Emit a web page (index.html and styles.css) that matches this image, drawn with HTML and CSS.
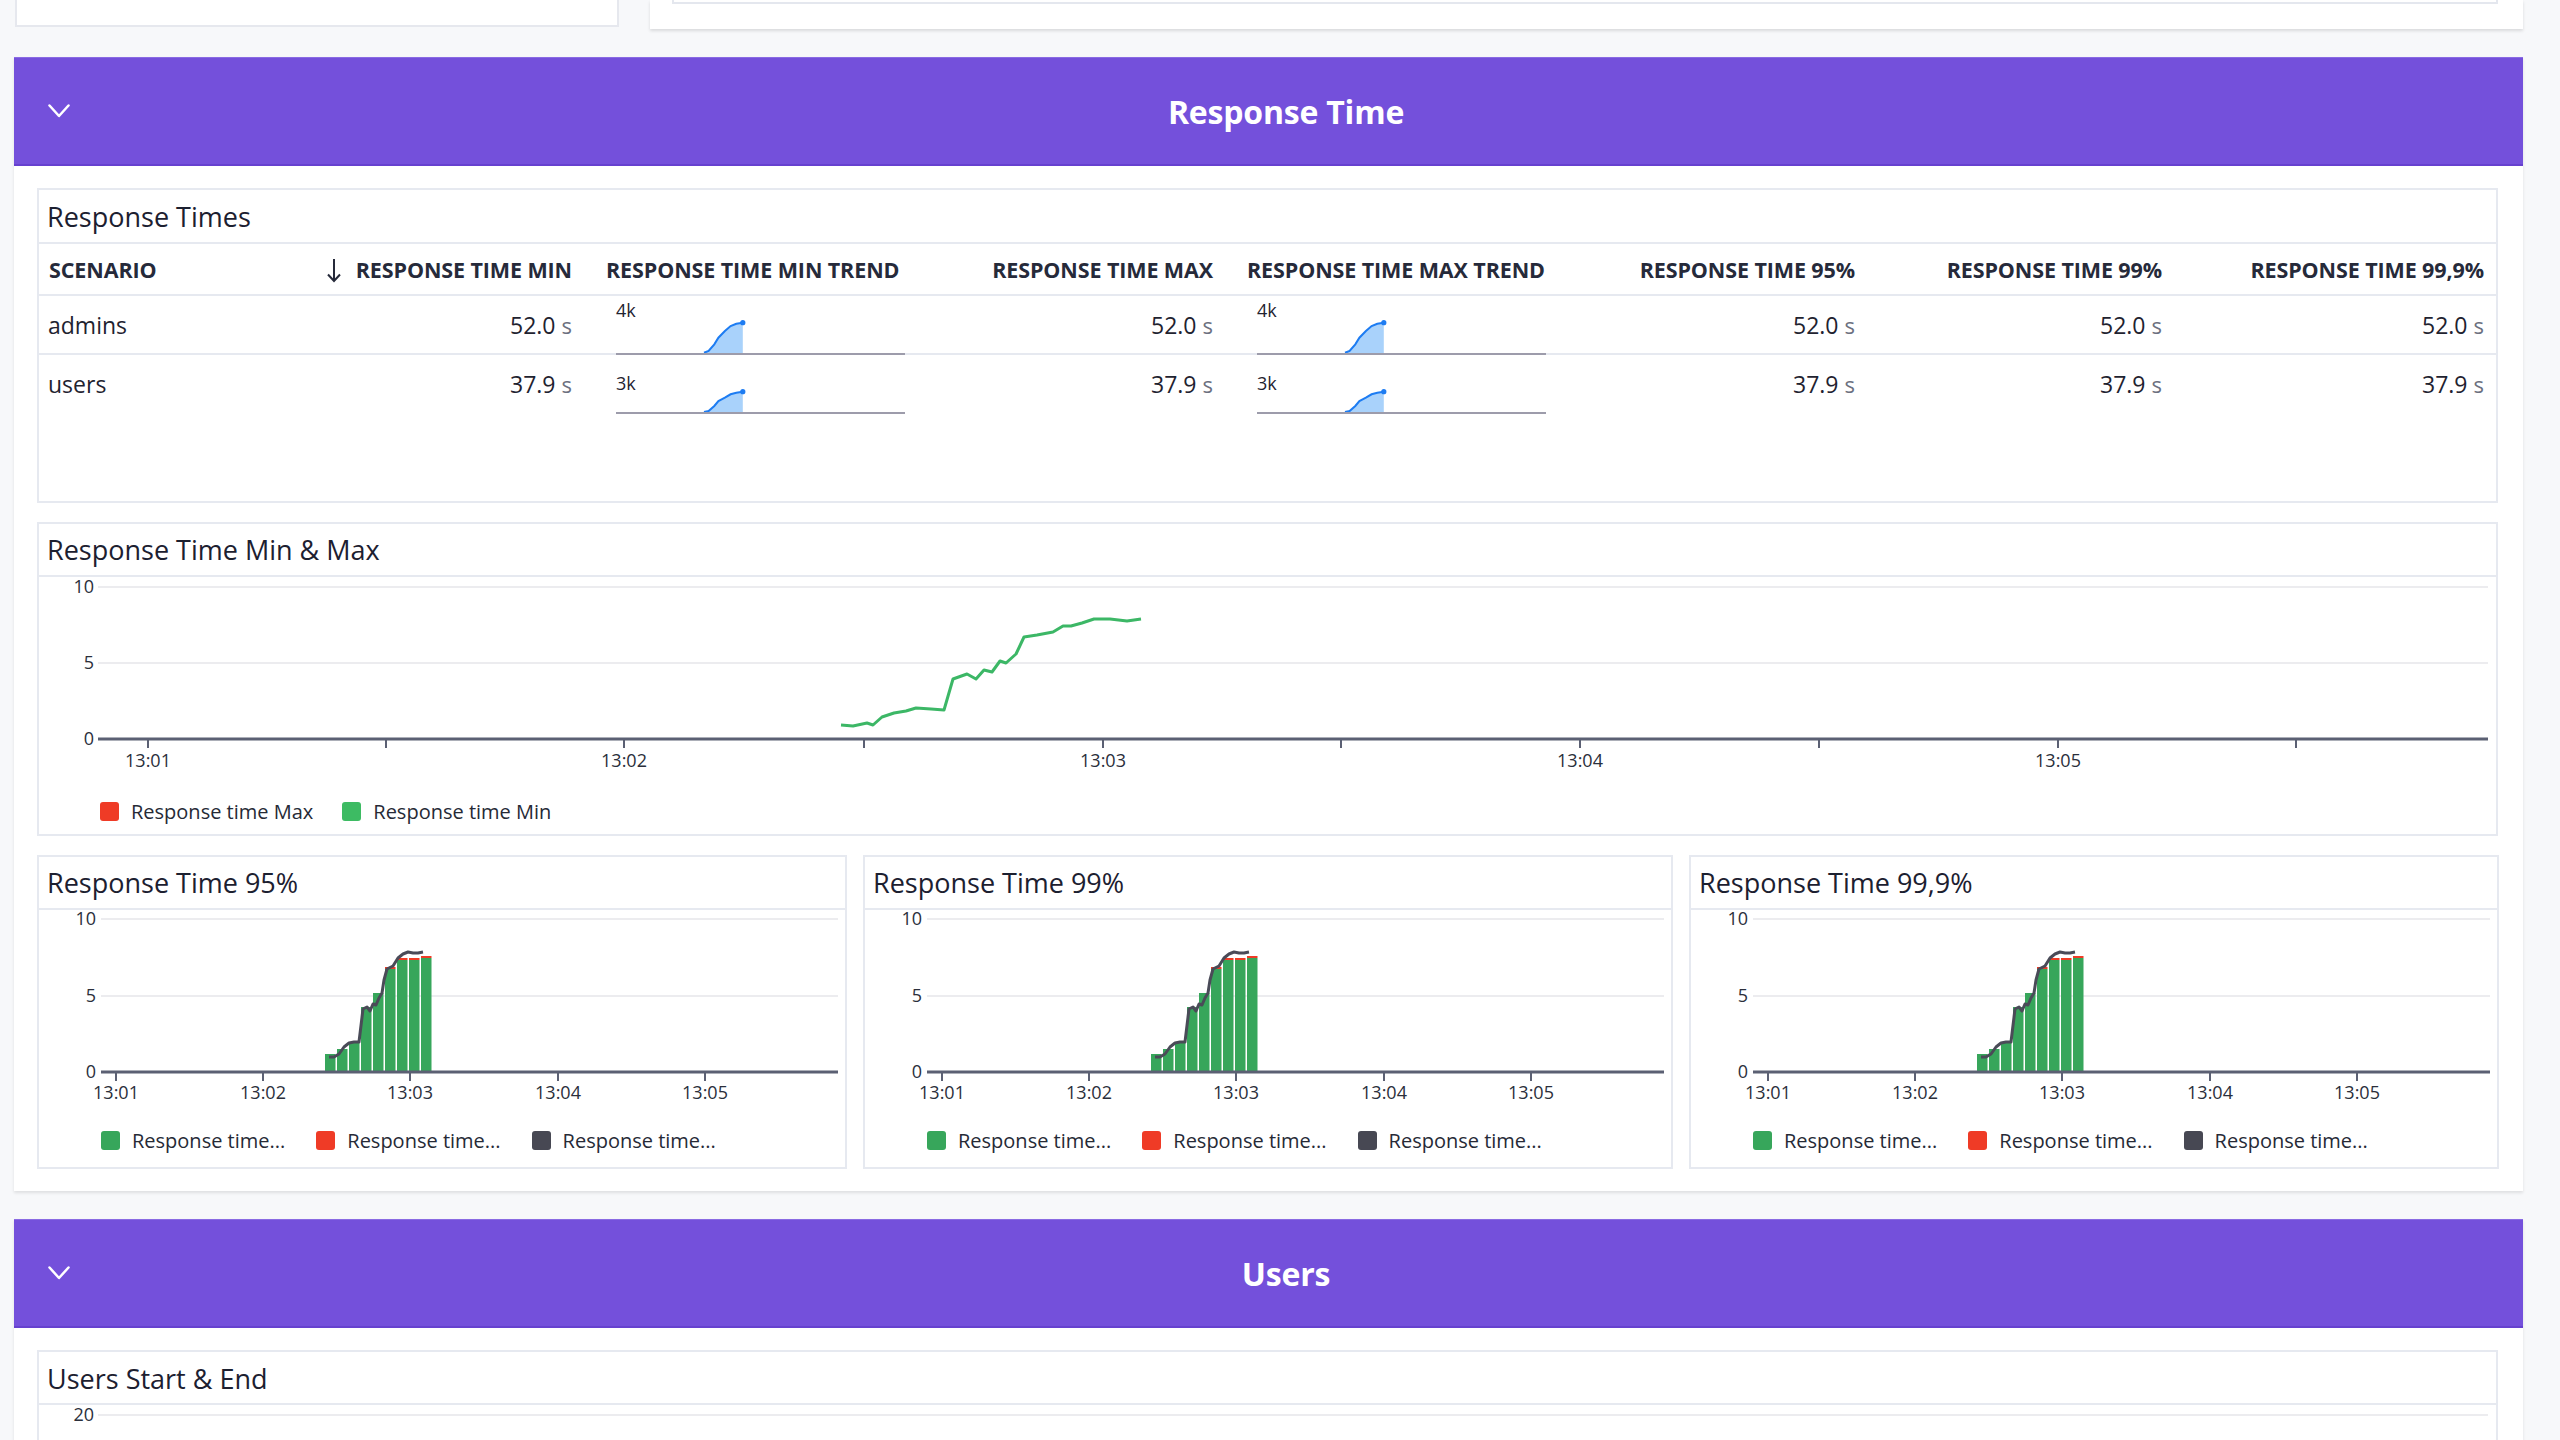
FILE: index.html
```html
<!DOCTYPE html>
<html lang="en">
<head>
<meta charset="utf-8">
<title>Report</title>
<link rel="stylesheet" href="styles.css">
</head>
<body>
<div class="page">
  <div class="top-row">
    <div class="top-card top-card-left"></div>
    <div class="top-card top-card-right"><div class="top-inner"></div></div>
  </div>

  <section class="section">
    <header class="section-head">
      <svg class="chev" width="22" height="14" viewBox="0 0 22 14"><polyline points="1.5,1.5 11,12 20.5,1.5" fill="none" stroke="#fff" stroke-width="2.5" stroke-linecap="round" stroke-linejoin="round"/></svg>
      <h2 class="section-title">Response Time</h2>
    </header>
    <div class="section-body">
      <div class="panel panel-table">
        <div class="panel-title">Response Times</div>
        <div class="trow thead">
          <div class="c c-left">SCENARIO</div>
          <div class="c c-right"><svg class="sort" width="14" height="25" viewBox="0 0 14 25"><line x1="7" y1="1" x2="7" y2="23" stroke="#262a3a" stroke-width="2"/><polyline points="1,16.5 7,23 13,16.5" fill="none" stroke="#262a3a" stroke-width="2"/></svg>RESPONSE TIME MIN</div>
          <div class="c c-trend">RESPONSE TIME MIN TREND</div>
          <div class="c c-right">RESPONSE TIME MAX</div>
          <div class="c c-trend">RESPONSE TIME MAX TREND</div>
          <div class="c c-right">RESPONSE TIME 95%</div>
          <div class="c c-right">RESPONSE TIME 99%</div>
          <div class="c c-right">RESPONSE TIME 99,9%</div>
        </div>
        <div class="trow tbody row-a">
          <div class="c c-left">admins</div>
          <div class="c c-right">52.0<span class="unit">s</span></div>
          <div class="c c-spark">
            <div class="spark spark-a">
              <span class="spark-label">4k</span>
              <svg width="289" height="57" viewBox="0 0 289 57" overflow="visible">
                <path d="M88 56.7 L92.6 55 L98.3 48.3 L102.4 41.7 L108.9 35 L114.6 30 L120.3 27.7 L126.8 26.7 L126.8 58 L88 58 Z" fill="#a9d2fb"/>
                <polyline points="88,56.7 92.6,55 98.3,48.3 102.4,41.7 108.9,35 114.6,30 120.3,27.7 126.8,26.7" fill="none" stroke="#1d7cf2" stroke-width="2"/>
                <circle cx="126.8" cy="26.7" r="2.6" fill="#1d7cf2"/>
                <line x1="0" y1="58" x2="289" y2="58" stroke="#9d9cab" stroke-width="2"/>
              </svg>
            </div>
          </div>
          <div class="c c-right">52.0<span class="unit">s</span></div>
          <div class="c c-spark">
            <div class="spark spark-a">
              <span class="spark-label">4k</span>
              <svg width="289" height="57" viewBox="0 0 289 57" overflow="visible">
                <path d="M88 56.7 L92.6 55 L98.3 48.3 L102.4 41.7 L108.9 35 L114.6 30 L120.3 27.7 L126.8 26.7 L126.8 58 L88 58 Z" fill="#a9d2fb"/>
                <polyline points="88,56.7 92.6,55 98.3,48.3 102.4,41.7 108.9,35 114.6,30 120.3,27.7 126.8,26.7" fill="none" stroke="#1d7cf2" stroke-width="2"/>
                <circle cx="126.8" cy="26.7" r="2.6" fill="#1d7cf2"/>
                <line x1="0" y1="58" x2="289" y2="58" stroke="#9d9cab" stroke-width="2"/>
              </svg>
            </div>
          </div>
          <div class="c c-right">52.0<span class="unit">s</span></div>
          <div class="c c-right">52.0<span class="unit">s</span></div>
          <div class="c c-right">52.0<span class="unit">s</span></div>
        </div>
        <div class="trow tbody row-b">
          <div class="c c-left">users</div>
          <div class="c c-right">37.9<span class="unit">s</span></div>
          <div class="c c-spark">
            <div class="spark spark-b">
              <span class="spark-label">3k</span>
              <svg width="289" height="57" viewBox="0 0 289 57" overflow="visible">
                <path d="M88 57 L92.6 56 L98.3 51 L102.4 46 L108.9 42.7 L114.6 39.3 L120.3 37.7 L126.8 36.7 L126.8 58 L88 58 Z" fill="#a9d2fb"/>
                <polyline points="88,57 92.6,56 98.3,51 102.4,46 108.9,42.7 114.6,39.3 120.3,37.7 126.8,36.7" fill="none" stroke="#1d7cf2" stroke-width="2"/>
                <circle cx="126.8" cy="36.7" r="2.6" fill="#1d7cf2"/>
                <line x1="0" y1="58" x2="289" y2="58" stroke="#9d9cab" stroke-width="2"/>
              </svg>
            </div>
          </div>
          <div class="c c-right">37.9<span class="unit">s</span></div>
          <div class="c c-spark">
            <div class="spark spark-b">
              <span class="spark-label">3k</span>
              <svg width="289" height="57" viewBox="0 0 289 57" overflow="visible">
                <path d="M88 57 L92.6 56 L98.3 51 L102.4 46 L108.9 42.7 L114.6 39.3 L120.3 37.7 L126.8 36.7 L126.8 58 L88 58 Z" fill="#a9d2fb"/>
                <polyline points="88,57 92.6,56 98.3,51 102.4,46 108.9,42.7 114.6,39.3 120.3,37.7 126.8,36.7" fill="none" stroke="#1d7cf2" stroke-width="2"/>
                <circle cx="126.8" cy="36.7" r="2.6" fill="#1d7cf2"/>
                <line x1="0" y1="58" x2="289" y2="58" stroke="#9d9cab" stroke-width="2"/>
              </svg>
            </div>
          </div>
          <div class="c c-right">37.9<span class="unit">s</span></div>
          <div class="c c-right">37.9<span class="unit">s</span></div>
          <div class="c c-right">37.9<span class="unit">s</span></div>
        </div>
      </div>

      <div class="panel panel-chart">
        <div class="panel-title">Response Time Min &amp; Max</div>
        <svg class="chart-big" width="2457" height="210" viewBox="0 0 2457 210">
          <g stroke="#ececef" stroke-width="2">
            <line x1="59" y1="10" x2="2449" y2="10"/>
            <line x1="59" y1="86" x2="2449" y2="86"/>
          </g>
          <g class="axis-text" text-anchor="end">
            <text x="55" y="16">10</text>
            <text x="55" y="92">5</text>
            <text x="55" y="168">0</text>
          </g>
          <g stroke="#5b6073" stroke-width="2">
            <line x1="109" y1="162" x2="109" y2="171"/>
            <line x1="347" y1="162" x2="347" y2="171"/>
            <line x1="585" y1="162" x2="585" y2="171"/>
            <line x1="825" y1="162" x2="825" y2="171"/>
            <line x1="1064" y1="162" x2="1064" y2="171"/>
            <line x1="1302" y1="162" x2="1302" y2="171"/>
            <line x1="1541" y1="162" x2="1541" y2="171"/>
            <line x1="1780" y1="162" x2="1780" y2="171"/>
            <line x1="2019" y1="162" x2="2019" y2="171"/>
            <line x1="2257" y1="162" x2="2257" y2="171"/>
          </g>
          <line x1="59" y1="162" x2="2449" y2="162" stroke="#5b6073" stroke-width="3"/>
          <g class="axis-text" text-anchor="middle">
            <text x="109" y="190">13:01</text>
            <text x="585" y="190">13:02</text>
            <text x="1064" y="190">13:03</text>
            <text x="1541" y="190">13:04</text>
            <text x="2019" y="190">13:05</text>
          </g>
          <polyline fill="none" stroke="#3cb766" stroke-width="3" stroke-linejoin="round" points="802,148 814,149 828,146 834,148 843,140 855,136 867,134 877,131 892,132 905,133 914,102 928,97 937,102 945,93 953,95 961,84 967,86 977,77 985,60 998,58 1014,55 1024,49 1032,49 1043,46 1055,42 1071,42 1088,44 1102,42"/>
        </svg>
        <div class="legend legend-big">
          <span class="lg"><i class="sw sw-red"></i>Response time Max</span>
          <span class="lg"><i class="sw sw-lgreen"></i>Response time Min</span>
        </div>
      </div>

      <div class="panel-row">
        <div class="panel panel-small">
          <div class="panel-title">Response Time 95%</div>
          <svg class="chart-small" width="806" height="200" viewBox="0 0 806 200">
            <use href="#smallchart"/>
          </svg>
          <div class="legend legend-small">
            <span class="lg"><i class="sw sw-green"></i>Response time...</span>
            <span class="lg"><i class="sw sw-red"></i>Response time...</span>
            <span class="lg"><i class="sw sw-dark"></i>Response time...</span>
          </div>
        </div>
        <div class="panel panel-small">
          <div class="panel-title">Response Time 99%</div>
          <svg class="chart-small" width="806" height="200" viewBox="0 0 806 200">
            <use href="#smallchart"/>
          </svg>
          <div class="legend legend-small">
            <span class="lg"><i class="sw sw-green"></i>Response time...</span>
            <span class="lg"><i class="sw sw-red"></i>Response time...</span>
            <span class="lg"><i class="sw sw-dark"></i>Response time...</span>
          </div>
        </div>
        <div class="panel panel-small">
          <div class="panel-title">Response Time 99,9%</div>
          <svg class="chart-small" width="806" height="200" viewBox="0 0 806 200">
            <use href="#smallchart"/>
          </svg>
          <div class="legend legend-small">
            <span class="lg"><i class="sw sw-green"></i>Response time...</span>
            <span class="lg"><i class="sw sw-red"></i>Response time...</span>
            <span class="lg"><i class="sw sw-dark"></i>Response time...</span>
          </div>
        </div>
      </div>
    </div>
  </section>

  <section class="section">
    <header class="section-head">
      <svg class="chev" width="22" height="14" viewBox="0 0 22 14"><polyline points="1.5,1.5 11,12 20.5,1.5" fill="none" stroke="#fff" stroke-width="2.5" stroke-linecap="round" stroke-linejoin="round"/></svg>
      <h2 class="section-title">Users</h2>
    </header>
    <div class="section-body">
      <div class="panel panel-users">
        <div class="panel-title">Users Start &amp; End</div>
        <svg class="chart-big" width="2457" height="120" viewBox="0 0 2457 120">
          <line x1="59" y1="10" x2="2449" y2="10" stroke="#ececef" stroke-width="2"/>
          <text class="axis-text" x="55" y="16" text-anchor="end">20</text>
        </svg>
      </div>
    </div>
  </section>
</div>

<svg width="0" height="0" class="defs">
  <defs>
    <g id="smallchart">
      <g stroke="#ececef" stroke-width="2">
        <line x1="62" y1="9" x2="799" y2="9"/>
        <line x1="62" y1="86" x2="799" y2="86"/>
      </g>
      <g class="axis-text" text-anchor="end">
        <text x="57" y="15">10</text>
        <text x="57" y="92">5</text>
        <text x="57" y="168">0</text>
      </g>
      <g fill="#37a65b">
        <rect x="286" y="144" width="10.5" height="18"/>
        <rect x="298" y="139" width="10.5" height="23"/>
        <rect x="310" y="133" width="10.5" height="29"/>
        <rect x="322" y="97" width="10.5" height="65"/>
        <rect x="334" y="83" width="10.5" height="79"/>
        <rect x="346" y="59" width="10.5" height="103"/>
        <rect x="358" y="50" width="10.5" height="112"/>
        <rect x="370" y="50" width="10.5" height="112"/>
        <rect x="382" y="48" width="10.5" height="114"/>
      </g>
      <g fill="#ef3b26">
        <rect x="346" y="57" width="10.5" height="2"/>
        <rect x="358" y="48" width="10.5" height="2"/>
        <rect x="370" y="48" width="10.5" height="2"/>
        <rect x="382" y="46" width="10.5" height="2"/>
      </g>
      <g stroke="#5b6073" stroke-width="2">
        <line x1="77" y1="162" x2="77" y2="171"/>
        <line x1="224" y1="162" x2="224" y2="171"/>
        <line x1="371" y1="162" x2="371" y2="171"/>
        <line x1="519" y1="162" x2="519" y2="171"/>
        <line x1="666" y1="162" x2="666" y2="171"/>
      </g>
      <line x1="62" y1="162" x2="799" y2="162" stroke="#5b6073" stroke-width="3"/>
      <polyline fill="none" stroke="#4a4b58" stroke-width="3" stroke-linejoin="round" points="290,147 295,147 300,144 305,137 310,133 315,132 320,132 324,99 328,97 331,101 334,94 337,95 340,88 343,83 345,70 348,59 354,56 359,48 364,44 369,42 374,43 379,43 384,42"/>
      <g class="axis-text" text-anchor="middle">
        <text x="77" y="189">13:01</text>
        <text x="224" y="189">13:02</text>
        <text x="371" y="189">13:03</text>
        <text x="519" y="189">13:04</text>
        <text x="666" y="189">13:05</text>
      </g>
    </g>
  </defs>
</svg>
</body>
</html>
```

FILE: styles.css
```css
* { box-sizing: border-box; }
html, body { margin: 0; padding: 0; }
body {
  background: #f7f8fa;
  font-family: "Open Sans", "Noto Sans", sans-serif;
  color: #1f2330;
  overflow: hidden;
  height: 1440px;
}
.defs { position: absolute; width: 0; height: 0; }
.page { padding: 0 37px 0 14px; }

.top-row { display: flex; gap: 31px; height: 29px; }
.top-card { background: #fff; }
.top-card-left {
  width: 604px; margin-left: 1px; height: 27px;
  border: 2px solid #e6e8ee; border-top: none;
}
.top-card-right {
  flex: 1; height: 29px;
  box-shadow: 0 2px 3px rgba(0,0,0,0.12);
  padding: 0 25px 0 22px;
}
.top-inner { height: 4px; border: 2px solid #e4e7ee; border-top: none; }

.section {
  background: #fff;
  margin-top: 28px;
  box-shadow: 0 2px 3px rgba(0,0,0,0.10);
}
.section-head {
  height: 109px;
  background: #7450db;
  border-top: 1px solid #8a6be3;
  border-bottom: 2px solid #6641cf;
  display: flex;
  align-items: center;
  padding: 0 21px 0 34px;
}
.chev { flex: none; }
.section-title {
  flex: 1; margin: 0; text-align: center;
  color: #fff; font-size: 32px; font-weight: 700;
  letter-spacing: -0.2px;
}
.section-body {
  padding: 22px 25px 22px 23px;
  display: flex; flex-direction: column; gap: 19px;
}

.panel { background: #fff; border: 2px solid #e6e9f0; }
.panel-title {
  height: 53px;
  border-bottom: 2px solid #e6e9f0;
  padding: 0 0 0 8px;
  font-size: 27px;
  line-height: 51px;
  color: #1c2030;
}
.panel-table .panel-title { height: 54px; line-height: 54px; }
.panel-users .panel-title { line-height: 53px; }

.panel-table { height: 315px; }
.trow {
  display: grid;
  grid-template-columns: 251px 294px 350px 291px 355px 287px 307px 322px;
}
.thead { height: 52px; border-bottom: 2px solid #e6e9f0; align-items: center; }
.thead .c { font-size: 21.5px; font-weight: 700; color: #262a3a; letter-spacing: -0.1px; }
.c { padding: 0 12px; white-space: nowrap; }
.c-left { padding-left: 10px; }
.tbody .c-left { padding-left: 9px; }
.c-right { text-align: right; }
.c-trend { padding-left: 22px; }
.sort { display: inline-block; vertical-align: -5px; margin-right: 15px; }

.tbody { height: 59px; align-items: start; font-size: 23px; color: #1f2330; }
.row-a { border-bottom: 2px solid #e6e9f0; }
.tbody .c { padding-top: 13px; }
.tbody .c-spark { padding: 0 0 0 32px; }
.unit { color: #6c7080; margin-left: 6px; font-size: 22px; }

.spark { position: relative; width: 289px; height: 57px; }
.spark svg { display: block; overflow: visible; }
.spark-label { position: absolute; left: 0; font-size: 18px; line-height: 18px; color: #1f2330; }
.spark-a .spark-label { top: 5px; }
.spark-b .spark-label { top: 19px; }

.chart-big, .chart-small { display: block; overflow: visible; }
.axis-text text, text.axis-text { font-family: "Open Sans", "Noto Sans", sans-serif; font-size: 18px; fill: #2b2f3b; }
.axis-text { font-family: "Open Sans", sans-serif; font-size: 18px; fill: #2b2f3b; }

.legend { display: flex; font-size: 20px; color: #262a36; }
.legend-big { padding: 4px 0 0 61px; height: 45px; gap: 29px; }
.legend-small { padding: 16px 0 0 62px; height: 45px; gap: 31px; }
.lg { display: inline-flex; align-items: center; gap: 12px; line-height: 22px; }
.sw { width: 19px; height: 19px; border-radius: 3px; display: inline-block; }
.sw-red { background: #ef3b26; }
.sw-lgreen { background: #3dbb63; }
.sw-green { background: #37a65b; }
.sw-dark { background: #474853; }

.panel-chart { height: 314px; }
.panel-row { display: flex; gap: 16px; }
.panel-small { flex: 1; height: 314px; }
.panel-users { height: 200px; }
```
